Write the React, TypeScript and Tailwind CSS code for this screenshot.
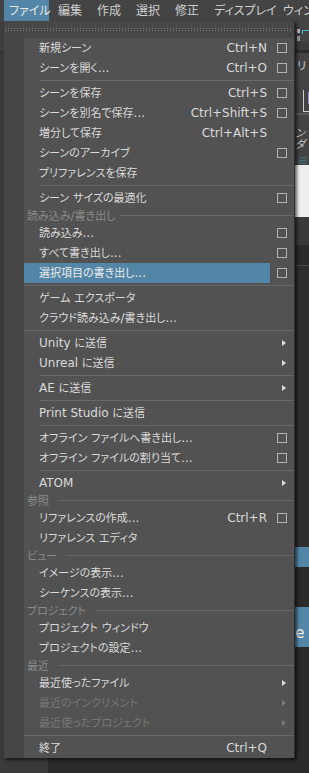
import React from "react";

type Row =
  | { t: "i"; l: string; sc?: string; box?: boolean; sub?: boolean; dis?: boolean; hl?: boolean }
  | { t: "s"; inset?: boolean }
  | { t: "h"; l: string; gap?: string };

const rows: Row[] = [
  { t: "i", l: "新規シーン", sc: "Ctrl+N", box: true },
  { t: "i", l: "シーンを開く...", sc: "Ctrl+O", box: true },
  { t: "s", inset: true },
  { t: "i", l: "シーンを保存", sc: "Ctrl+S", box: true },
  { t: "i", l: "シーンを別名で保存...", sc: "Ctrl+Shift+S", box: true },
  { t: "i", l: "増分して保存", sc: "Ctrl+Alt+S" },
  { t: "i", l: "シーンのアーカイブ", box: true },
  { t: "i", l: "プリファレンスを保存" },
  { t: "s", inset: true },
  { t: "i", l: "シーン サイズの最適化", box: true },
  { t: "h", l: "読み込み/書き出し", gap: "ml-[3px]" },
  { t: "i", l: "読み込み...", box: true },
  { t: "i", l: "すべて書き出し...", box: true },
  { t: "i", l: "選択項目の書き出し...", box: true, hl: true },
  { t: "s" },
  { t: "i", l: "ゲーム エクスポータ" },
  { t: "i", l: "クラウド読み込み/書き出し..." },
  { t: "s" },
  { t: "i", l: "Unity に送信", sub: true },
  { t: "i", l: "Unreal に送信", sub: true },
  { t: "s", inset: true },
  { t: "i", l: "AE に送信", sub: true },
  { t: "s", inset: true },
  { t: "i", l: "Print Studio に送信" },
  { t: "s", inset: true },
  { t: "i", l: "オフライン ファイルへ書き出し...", box: true },
  { t: "i", l: "オフライン ファイルの割り当て...", box: true },
  { t: "s", inset: true },
  { t: "i", l: "ATOM", sub: true },
  { t: "h", l: "参照" },
  { t: "i", l: "リファレンスの作成...", sc: "Ctrl+R", box: true },
  { t: "i", l: "リファレンス エディタ" },
  { t: "h", l: "ビュー" },
  { t: "i", l: "イメージの表示..." },
  { t: "i", l: "シーケンスの表示..." },
  { t: "h", l: "プロジェクト" },
  { t: "i", l: "プロジェクト ウィンドウ" },
  { t: "i", l: "プロジェクトの設定..." },
  { t: "h", l: "最近" },
  { t: "i", l: "最近使ったファイル", sub: true },
  { t: "i", l: "最近のインクリメント", sub: true, dis: true },
  { t: "i", l: "最近使ったプロジェクト", sub: true, dis: true },
  { t: "s" },
  { t: "i", l: "終了", sc: "Ctrl+Q" },
];

// menu bar: label + width of its slot
const menus = [
  { l: "ファイル", w: "w-[45px] pl-[5px]" },
  { l: "編集", w: "w-[39px] pl-[9px]" },
  { l: "作成", w: "w-[39px] pl-[9px]" },
  { l: "選択", w: "w-[39px] pl-[9px]" },
  { l: "修正", w: "w-[39px] pl-[9px]" },
  { l: "ディスプレイ", w: "w-[69px] pl-[9px]" },
  { l: "ウィンドウ", w: "pl-[9px]" },
];

// japanese runs are drawn a bit smaller than the latin ones
function T({ s }: { s: string }) {
  const parts = s.split(/([\u3000-\u30ff\u4e00-\u9fff\uff00-\uffef]+)/);
  return (
    <>
      {parts.map((p, i) =>
        !p ? null : i % 2 ? (
          <span key={i} className="text-[11px]">
            {p}
          </span>
        ) : (
          <span key={i}>{p}</span>
        )
      )}
    </>
  );
}

function MenuRow({ r }: { r: Row }) {
  if (r.t === "s") {
    return (
      <div className={`h-[5px] flex items-center ${r.inset ? "pl-[16px]" : ""}`}>
        <div className="flex-1 h-px bg-[#686868]" />
      </div>
    );
  }
  if (r.t === "h") {
    return (
      <div className="h-[15px] flex items-center pl-[3px] text-[#8a8a8a]">
        <span className="whitespace-nowrap">
          <T s={r.l} />
        </span>
        <div className={`flex-1 h-px bg-[#686868] ${r.gap ?? "ml-[10px]"}`} />
      </div>
    );
  }
  const txt = r.dis ? "text-[#787878]" : r.hl ? "text-[#eeeeee]" : "text-[#dadada]";
  return (
    <div className="h-[20px] flex">
      <div
        className={`flex-1 flex items-center justify-between pl-[15px] pr-[3px] ${
          r.hl ? "bg-[#5285a6]" : ""
        } ${txt}`}
      >
        <span className="whitespace-nowrap">
          <T s={r.l} />
        </span>
        {r.sc && <span className="whitespace-nowrap">{r.sc}</span>}
      </div>
      <div className="w-[24px] flex items-center">
        {r.box && <div className="ml-[7px] w-[10px] h-[10px] border border-[#b2b2b2]" />}
        {r.sub && (
          <div
            className={`ml-[12px] w-0 h-0 border-y-[3px] border-y-transparent border-l-[4px] ${
              r.dis ? "border-l-[#7a7a7a]" : "border-l-[#dedede]"
            }`}
          />
        )}
      </div>
    </div>
  );
}

function SideStrip() {
  return (
    <div className="w-[14px] flex flex-col text-[12px]">
      <div className="h-[7px] bg-[#444444]" />
      <div className="h-[14px] bg-[#444444] flex gap-[2px] pl-[2px] pt-[1px]">
        <div className="flex flex-col gap-[3px]">
          <div className="w-[3px] h-[4px] bg-[#bdbdbd]" />
          <div className="w-[3px] h-[5px] bg-[#9a9a9a]" />
        </div>
        <div className="w-[7px] h-[4px] border-l border-t border-[#4fb8c4] mt-[1px]" />
      </div>
      <div className="h-[8px] bg-[#3c3c3c]" />
      <div className="h-[3px] bg-[#2b2b2b]" />
      <div className="h-[60px] bg-[#444444] flex flex-col pl-[2px]">
        <span className="text-[#d0d0d0] text-[11px] mt-[8px] leading-none">リ</span>
        <div className="ml-[6px] mt-[18px] h-[22px] border-l border-b border-[#cfcfcf] pt-[2px] pl-[4px]">
          <div className="w-[4px] h-[12px] bg-[#9a8fd6]" />
        </div>
      </div>
      <div className="h-[2px] bg-[#5a5a5a]" />
      <div className="h-[50px] bg-[#444444] flex flex-col">
        <span className="text-[#c8c8c8] text-[11px] italic mt-[13px] leading-none">ンダ</span>
        <svg width="14" height="14" viewBox="0 0 14 14" className="mt-[6px]">
          <rect x="2.5" y="2.5" width="11" height="9" fill="none" stroke="#3fb3c0" strokeDasharray="1 1" />
          <line x1="8" y1="2" x2="8" y2="12" stroke="#3fb3c0" strokeDasharray="1 1" />
          <line x1="2" y1="7" x2="14" y2="7" stroke="#3fb3c0" strokeDasharray="1 1" />
        </svg>
      </div>
      <div className="h-[52px] bg-[#eeeeee]" />
      <div className="h-[28px] bg-[#3a3a3a]" />
      <div className="h-[20px] bg-[#2b2b2b]" />
      <div className="h-px bg-[#474747]" />
      <div className="h-[281px] bg-[#2e2e2e]" />
      <div className="h-[20px] bg-[#5285a6]" />
      <div className="h-[40px] bg-[#2b2b2b]" />
      <div className="h-[40px] bg-[#5285a6] flex items-center">
        <span className="-ml-[8px] text-[15px] text-[#f2f2f2] mt-[12px]">ce</span>
      </div>
      <div className="flex-1 bg-[#2b2b2b]" />
    </div>
  );
}

export default function App() {
  return (
    <div className="relative w-[309px] h-[773px] overflow-hidden bg-[#2b2b2b] text-[12px] leading-none font-['DejaVu_Sans','Noto_Sans_CJK_JP',sans-serif] [font-feature-settings:'palt']">
      {/* menu bar */}
      <div className="h-[21px] bg-[#444444] flex pl-[4px] text-[#d0d0d0] whitespace-nowrap">
        {menus.map((m, i) => (
          <div
            key={m.l}
            className={`h-full shrink-0 flex items-center ${m.w} ${
              i === 0 ? "bg-[#5285a6] text-[#e8e8e8]" : ""
            }`}
          >
            {m.l}
          </div>
        ))}
      </div>

      {/* background behind the menu */}
      <div className="h-[752px] flex">
        <div className="w-[48px] flex flex-col">
          <div className="h-[31px] bg-[#3e3e3e]" />
          <div className="h-px bg-[#2e2e2e]" />
          <div className="flex-1 bg-[#3a3a3a]" />
        </div>
        <div className="flex-1 bg-[#2b2b2b]" />
        <SideStrip />
      </div>

      {/* dropdown */}
      <div className="absolute left-[4px] top-[21px] w-[291px] border-r border-[#2c2c2c] shadow-[2px_2px_3px_rgba(0,0,0,0.6)]">
        <div className="h-[17px] bg-[#474747] flex flex-col justify-center gap-px px-px">
          <div className="h-px bg-[repeating-linear-gradient(90deg,#7c7c7c_0px,#7c7c7c_1px,transparent_1px,transparent_3px)]" />
          <div className="h-px bg-[repeating-linear-gradient(90deg,#7c7c7c_0px,#7c7c7c_1px,transparent_1px,transparent_3px)]" />
        </div>
        <div className="flex">
          <div className="w-[20px] bg-[#464646]" />
          <div className="flex-1 bg-[#525252] flex flex-col">
            {rows.map((r, i) => (
              <MenuRow key={i} r={r} />
            ))}
          </div>
        </div>
      </div>
    </div>
  );
}
